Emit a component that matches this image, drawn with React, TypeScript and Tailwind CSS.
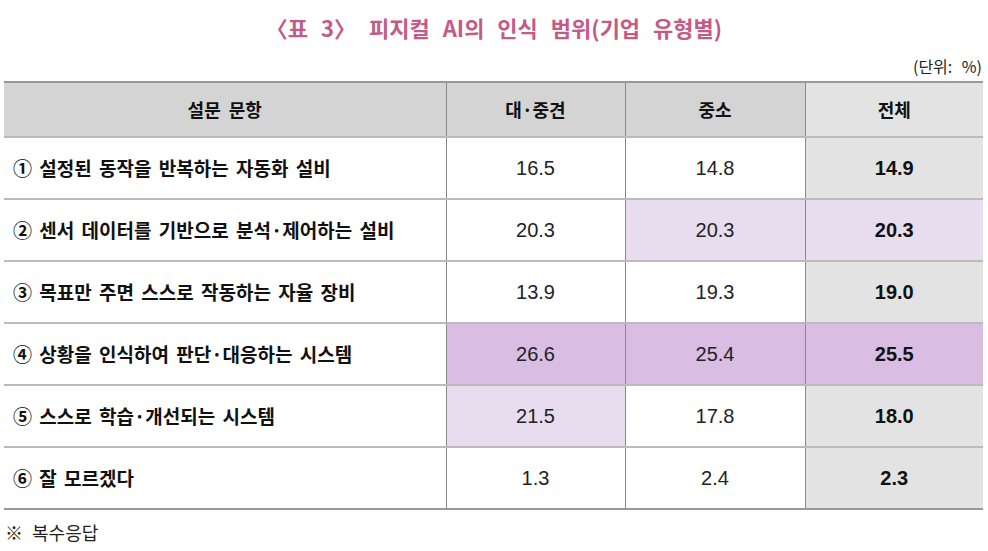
const rows = [
  { label: "① 설정된 동작을 반복하는 자동화 설비", a: "16.5", b: "14.8", t: "14.9", hl: ["", "", ""] },
  { label: "② 센서 데이터를 기반으로 분석·제어하는 설비", a: "20.3", b: "20.3", t: "20.3", hl: ["", "bg-[#e8dcef]", "bg-[#e8dcef]"] },
  { label: "③ 목표만 주면 스스로 작동하는 자율 장비", a: "13.9", b: "19.3", t: "19.0", hl: ["", "", ""] },
  { label: "④ 상황을 인식하여 판단·대응하는 시스템", a: "26.6", b: "25.4", t: "25.5", hl: ["bg-[#d9bde3]", "bg-[#d9bde3]", "bg-[#d9bde3]"] },
  { label: "⑤ 스스로 학습·개선되는 시스템", a: "21.5", b: "17.8", t: "18.0", hl: ["bg-[#e8dcef]", "", ""] },
  { label: "⑥ 잘 모르겠다", a: "1.3", b: "2.4", t: "2.3", hl: ["", "", ""] },
];

const font = "font-['Liberation_Sans','Noto_Sans_CJK_KR',sans-serif]";
const kr = "font-['Noto_Sans_CJK_KR',sans-serif]";

export default function App() {
  return (
    <div className={`w-[988px] h-[551px] bg-white text-[#111] ${font} overflow-hidden`}>
      <h1 className={`pt-[11px] h-[52px] text-center text-[22px] font-bold text-[#c25b85] [word-spacing:8px] ${kr}`}>
        〈표 3〉 피지컬 AI의 인식 범위(기업 유형별)
      </h1>
      <div className={`h-[29px] pr-[6px] text-right text-[16px] text-[#222] leading-[29px] [word-spacing:6px] ${kr}`}>(단위: %)</div>
      <table className="ml-[4px] w-[979px] border-collapse border-t-2 border-b-2 border-t-[#999] border-b-[#999] table-fixed">
        <colgroup>
          <col className="w-[442px]" />
          <col className="w-[179px]" />
          <col className="w-[180px]" />
          <col className="w-[178px]" />
        </colgroup>
        <thead>
          <tr className={`h-[55px] text-[18px] font-bold ${kr}`}>
            <th className="bg-[#d4d4d4] border-b-2 border-[#bbb] font-bold [word-spacing:4px]">설문 문항</th>
            <th className="bg-[#d4d4d4] border-b-2 border-l border-[#bbb] border-l-[#888] font-bold">대·중견</th>
            <th className="bg-[#d4d4d4] border-b-2 border-l border-[#bbb] border-l-[#888] font-bold">중소</th>
            <th className="bg-[#e3e3e3] border-b-2 border-l border-[#bbb] border-l-[#888] font-bold">전체</th>
          </tr>
        </thead>
        <tbody>
          {rows.map((r, i) => (
            <tr key={i} className={`h-[62px] text-[20px] ${i < rows.length - 1 ? "border-b-2 border-[#bbb]" : ""}`}>
              <td className={`pl-[9px] text-[19px] font-bold ${kr} [word-spacing:3px]`}>{r.label}</td>
              <td className={`text-center border-l border-l-[#888] text-[#222] ${r.hl[0]}`}>{r.a}</td>
              <td className={`text-center border-l border-l-[#888] text-[#222] ${r.hl[1]}`}>{r.b}</td>
              <td className={`text-center border-l border-l-[#888] font-bold ${r.hl[2] || "bg-[#e3e3e3]"}`}>{r.t}</td>
            </tr>
          ))}
        </tbody>
      </table>
      <div className={`pl-[5px] pt-[9px] text-[18px] text-[#222] [word-spacing:5px] ${kr}`}>※ 복수응답</div>
    </div>
  );
}
